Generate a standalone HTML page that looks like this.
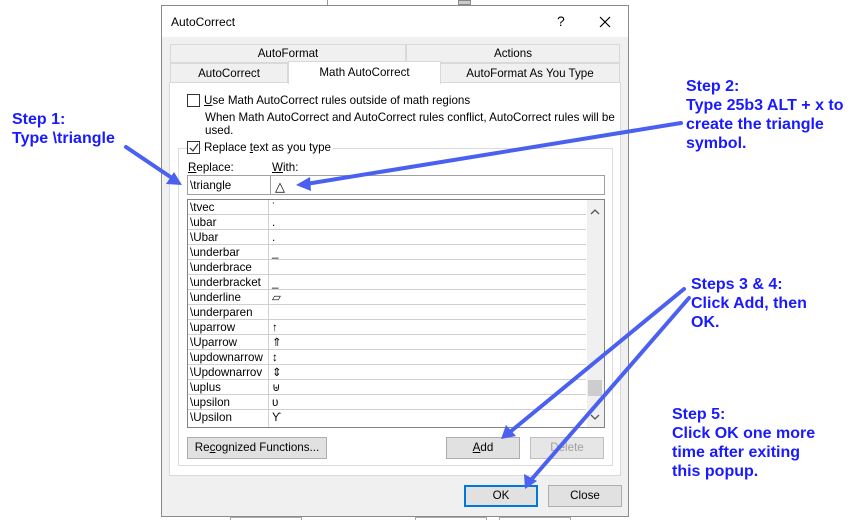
<!DOCTYPE html>
<html><head><meta charset="utf-8"><style>
*{margin:0;padding:0;box-sizing:border-box}
body{width:868px;height:520px;background:#fff;position:relative;overflow:hidden;font-family:"Liberation Sans",Arial,sans-serif;font-size:11.6px;color:#000}
.a{position:absolute}
.step{position:absolute;color:#1a1aff;font-weight:bold;font-size:16px;line-height:19px}
.tab{position:absolute;background:#f0f0f0;border:1px solid #d9d9d9;text-align:center;font-size:11.6px}
.btn{position:absolute;background:#e1e1e1;border:1px solid #adadad;text-align:center;font-size:11.6px;line-height:19px}
.row{position:absolute;left:0;width:398px;height:15px;border-bottom:1px solid #d0d0d0;font-size:11.6px;line-height:15px}
.row span{position:absolute;left:2px}
.row i{position:absolute;left:84px;font-style:normal}
.cb{position:absolute;width:13px;height:13px;border:1px solid #333;background:#fff}
</style></head><body>
<div class="a" style="left:327px;top:0;width:1px;height:5px;background:#999"></div>
<div class="a" style="left:458px;top:0;width:13px;height:5px;background:#ccc;border:1px solid #888"></div>
<div class="a" style="left:230px;top:517px;width:72px;height:3px;border:1px solid #aaa;border-bottom:none"></div>
<div class="a" style="left:415px;top:517px;width:72px;height:3px;border:1px solid #aaa;border-bottom:none"></div>
<div class="a" style="left:499px;top:517px;width:72px;height:3px;border:1px solid #aaa;border-bottom:none"></div>

<div class="a" style="left:161px;top:5px;width:468px;height:512px;background:#f0f0f0;border:1px solid #8a8a8a">
  <div class="a" style="left:0;top:0;width:466px;height:31px;background:#fff"></div>
  <div class="a" style="left:9px;top:9px;font-size:12px">AutoCorrect</div>
  <div class="a" style="left:395px;top:7px;font-size:14px">?</div>
  <svg class="a" style="left:437px;top:10px" width="12" height="12"><path d="M1 1L11 11M11 1L1 11" stroke="#000" stroke-width="1.2"/></svg>

  <div class="tab" style="left:8px;top:38px;width:236px;height:19px;line-height:18px">AutoFormat</div>
  <div class="tab" style="left:244px;top:38px;width:214px;height:19px;line-height:18px">Actions</div>
  <div class="tab" style="left:8px;top:57px;width:118px;height:20px;line-height:20px">AutoCorrect</div>
  <div class="tab" style="left:278px;top:57px;width:180px;height:20px;line-height:20px">AutoFormat As You Type</div>
  <div class="a" style="left:7px;top:76px;width:452px;height:394px;background:#fff;border:1px solid #d9d9d9"></div>
  <div class="a" style="left:126px;top:55px;width:153px;height:23px;background:#fff;border:1px solid #d9d9d9;border-bottom:none;text-align:center;line-height:22px">Math AutoCorrect</div>

  <div class="cb" style="left:25px;top:88px"></div>
  <div class="a" style="left:42px;top:88px"><u>U</u>se Math AutoCorrect rules outside of math regions</div>
  <div class="a" style="left:43px;top:105px;line-height:13px;width:410px">When Math AutoCorrect and AutoCorrect rules conflict, AutoCorrect rules will be used.</div>

  <div class="a" style="left:16px;top:142px;width:435px;height:318px;border:1px solid #dcdcdc"></div>
  <div class="cb" style="left:25px;top:135px"></div>
  <svg class="a" style="left:26px;top:136px" width="12" height="12"><path d="M2 6L5 9L10 2" stroke="#333" fill="none" stroke-width="1.2"/></svg>
  <div class="a" style="left:40px;top:135px;background:#fff;padding:0 2px">Replace <u>t</u>ext as you type</div>
  <div class="a" style="left:26px;top:155px"><u>R</u>eplace:</div>
  <div class="a" style="left:110px;top:155px"><u>W</u>ith:</div>
  <div class="a" style="left:25px;top:169px;width:84px;height:20px;border:1px solid #a0a0a0;background:#fff;padding:2px 2px;line-height:15px">\triangle</div>
  <div class="a" style="left:108px;top:169px;width:335px;height:20px;border:1px solid #a0a0a0;background:#fff;padding:2px 4px;line-height:17px;font-size:13px">△</div>

  <div class="a" style="left:25px;top:193px;width:418px;height:229px;border:1px solid #828282;background:#fff;overflow:hidden">
    <div class="a" style="left:80px;top:0;width:1px;height:229px;background:#d0d0d0"></div>
    <div class="row" style="top:0"><span>\tvec</span><i>˙</i></div>
    <div class="row" style="top:15px"><span>\ubar</span><i>.</i></div>
    <div class="row" style="top:30px"><span>\Ubar</span><i>.</i></div>
    <div class="row" style="top:45px"><span>\underbar</span><i>_</i></div>
    <div class="row" style="top:60px"><span>\underbrace</span><i></i></div>
    <div class="row" style="top:75px"><span>\underbracket</span><i>_</i></div>
    <div class="row" style="top:90px"><span>\underline</span><i>▱</i></div>
    <div class="row" style="top:105px"><span>\underparen</span><i></i></div>
    <div class="row" style="top:120px"><span>\uparrow</span><i>↑</i></div>
    <div class="row" style="top:135px"><span>\Uparrow</span><i>⇑</i></div>
    <div class="row" style="top:150px"><span>\updownarrow</span><i>↕</i></div>
    <div class="row" style="top:165px"><span>\Updownarrov</span><i>⇕</i></div>
    <div class="row" style="top:180px"><span>\uplus</span><i>⊎</i></div>
    <div class="row" style="top:195px"><span>\upsilon</span><i>υ</i></div>
    <div class="row" style="top:210px;border:none"><span>\Upsilon</span><i>ϒ</i></div>
    <div class="a" style="left:399px;top:0;width:17px;height:229px;background:#f0f0f0"></div>
    <div class="a" style="left:400px;top:180px;width:14px;height:16px;background:#cdcdcd"></div>
    <svg class="a" style="left:402px;top:9px" width="10" height="6"><path d="M1 5L5 1L9 5" stroke="#555" fill="none" stroke-width="1.3"/></svg>
    <svg class="a" style="left:402px;top:214px" width="10" height="6"><path d="M1 1L5 5L9 1" stroke="#555" fill="none" stroke-width="1.3"/></svg>
  </div>

  <div class="btn" style="left:25px;top:431px;width:140px;height:22px">Re<u>c</u>ognized Functions...</div>
  <div class="btn" style="left:284px;top:431px;width:74px;height:22px"><u>A</u>dd</div>
  <div class="btn" style="left:368px;top:431px;width:74px;height:22px;color:#a0a0a0;border-color:#bfbfbf;background:#e6e6e6">Delete</div>
  <div class="btn" style="left:302px;top:479px;width:74px;height:22px;border:2px solid #0078d7;line-height:18px">OK</div>
  <div class="btn" style="left:386px;top:479px;width:74px;height:22px">Close</div>
</div>

<div class="step" style="left:12px;top:110px">Step 1:<br>Type \triangle</div>
<div class="step" style="left:686px;top:77px">Step 2:<br>Type 25b3 ALT + x to<br>create the triangle<br>symbol.</div>
<div class="step" style="left:691px;top:275px">Steps 3 &amp; 4:<br>Click Add, then<br>OK.</div>
<div class="step" style="left:672px;top:405px">Step 5:<br>Click OK one more<br>time after exiting<br>this popup.</div>

<svg class="a" style="left:0;top:0" width="868" height="520">
  <g stroke="#4a60f0" stroke-width="4" fill="none" stroke-linecap="round">
    <path d="M126 147L172 178"/>
    <path d="M681 123L306 184"/>
    <path d="M684 289L510 432"/>
    <path d="M689 298L531 480"/>
  </g>
  <g fill="#4a60f0">
    <path d="M182 185L166 184L174 172Z"/>
    <path d="M296 185L310 177L311 191Z"/>
    <path d="M501 439L506 425L516 436Z"/>
    <path d="M525 489L524 474L537 481Z"/>
  </g>
</svg>
</body></html>
